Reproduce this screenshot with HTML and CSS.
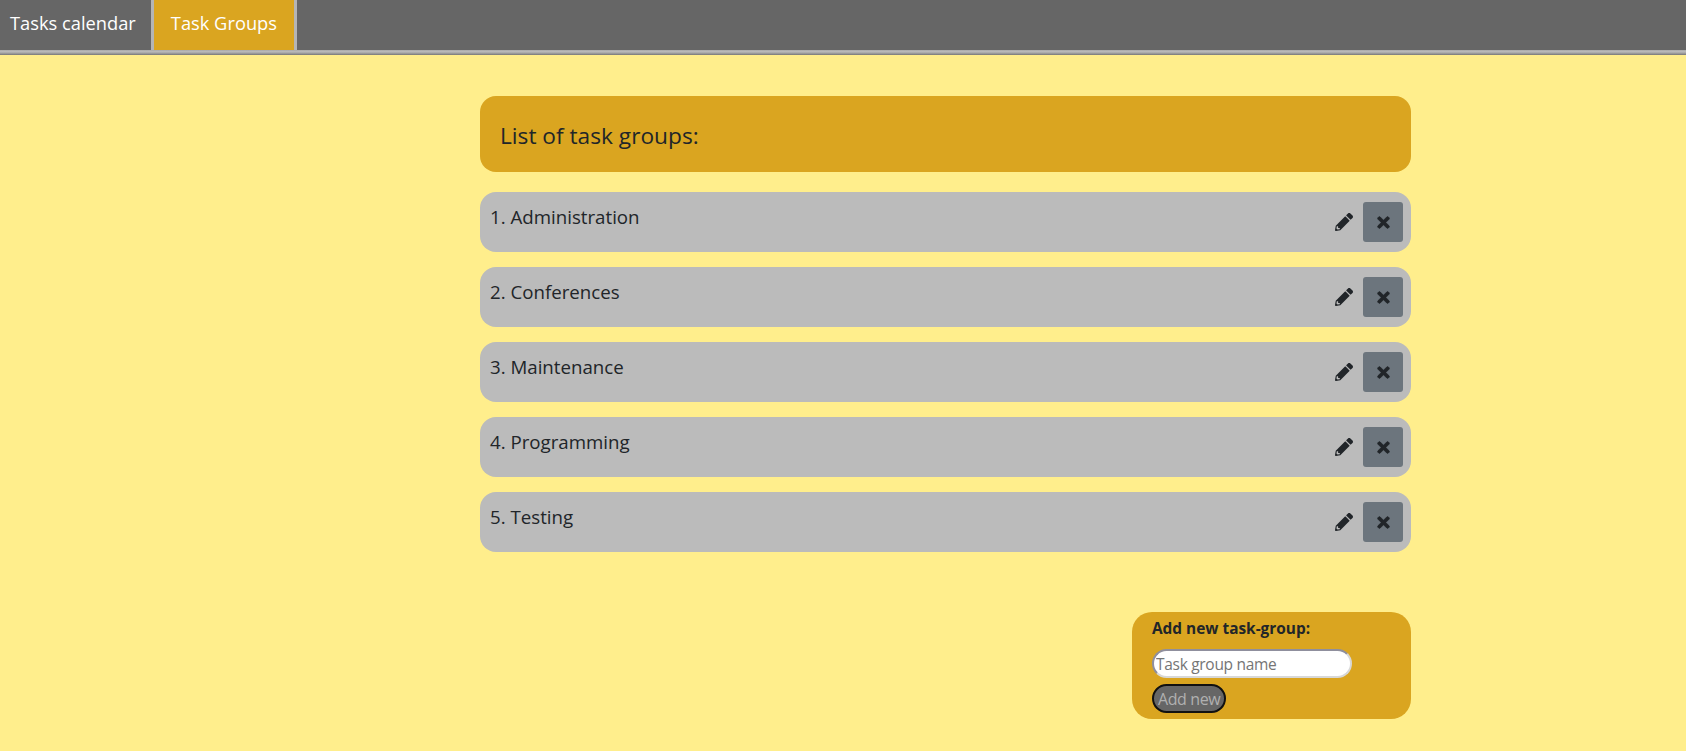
FILE: index.html
```html
<!DOCTYPE html>
<html lang="en">
<head>
    <meta charset="UTF-8">
    <meta name="viewport" content="width=device-width, initial-scale=1.0">
    <title>Task Groups</title>
    <link rel="stylesheet" href="styles.css">
</head>
<body>
    <nav class="topbar">
        <div class="tabs">
            <a class="tab" href="#">Tasks calendar</a>
            <a class="tab active" href="#">Task Groups</a>
        </div>
        <div class="topbar-line"></div>
    </nav>

    <main class="container">
        <div class="list-header">List of task groups:</div>

        <div class="group-row">
            <span class="group-name">1. Administration</span>
            <div class="group-actions">
                <svg class="icon-edit" viewBox="0 0 512 512"><path d="M497.9 142.1l-46.1 46.1c-4.7 4.7-12.3 4.7-17 0l-111-111c-4.7-4.7-4.7-12.3 0-17l46.1-46.1c18.7-18.7 49.1-18.7 67.9 0l60.1 60.1c18.8 18.7 18.8 49.1 0 67.9zM284.2 99.8L21.6 362.4.4 483.9c-2.9 16.4 11.4 30.6 27.8 27.8l121.5-21.3 262.6-262.6c4.7-4.7 4.7-12.3 0-17l-111-111c-4.8-4.7-12.4-4.7-17.1 0zM88 424h48v36.3l-64.5 11.3-31.1-31.1L51.7 376H88v48z"/></svg>
                <button class="btn-delete"><svg class="icon-delete" viewBox="-20 60 392 392"><path d="M242.72 256l100.07-100.07c12.28-12.28 12.28-32.19 0-44.48l-22.24-22.24c-12.28-12.28-32.19-12.28-44.48 0L176 189.28 75.93 89.21c-12.28-12.28-32.19-12.28-44.48 0L9.21 111.45c-12.28 12.28-12.28 32.19 0 44.48L109.28 256 9.21 356.07c-12.28 12.28-12.28 32.19 0 44.48l22.24 22.24c12.28 12.28 32.2 12.28 44.48 0L176 322.72l100.07 100.07c12.28 12.28 32.2 12.28 44.48 0l22.24-22.24c12.28-12.28 12.28-32.19 0-44.48L242.72 256z"/></svg></button>
            </div>
        </div>

        <div class="group-row">
            <span class="group-name">2. Conferences</span>
            <div class="group-actions">
                <svg class="icon-edit" viewBox="0 0 512 512"><path d="M497.9 142.1l-46.1 46.1c-4.7 4.7-12.3 4.7-17 0l-111-111c-4.7-4.7-4.7-12.3 0-17l46.1-46.1c18.7-18.7 49.1-18.7 67.9 0l60.1 60.1c18.8 18.7 18.8 49.1 0 67.9zM284.2 99.8L21.6 362.4.4 483.9c-2.9 16.4 11.4 30.6 27.8 27.8l121.5-21.3 262.6-262.6c4.7-4.7 4.7-12.3 0-17l-111-111c-4.8-4.7-12.4-4.7-17.1 0zM88 424h48v36.3l-64.5 11.3-31.1-31.1L51.7 376H88v48z"/></svg>
                <button class="btn-delete"><svg class="icon-delete" viewBox="-20 60 392 392"><path d="M242.72 256l100.07-100.07c12.28-12.28 12.28-32.19 0-44.48l-22.24-22.24c-12.28-12.28-32.19-12.28-44.48 0L176 189.28 75.93 89.21c-12.28-12.28-32.19-12.28-44.48 0L9.21 111.45c-12.28 12.28-12.28 32.19 0 44.48L109.28 256 9.21 356.07c-12.28 12.28-12.28 32.19 0 44.48l22.24 22.24c12.28 12.28 32.2 12.28 44.48 0L176 322.72l100.07 100.07c12.28 12.28 32.2 12.28 44.48 0l22.24-22.24c12.28-12.28 12.28-32.19 0-44.48L242.72 256z"/></svg></button>
            </div>
        </div>

        <div class="group-row">
            <span class="group-name">3. Maintenance</span>
            <div class="group-actions">
                <svg class="icon-edit" viewBox="0 0 512 512"><path d="M497.9 142.1l-46.1 46.1c-4.7 4.7-12.3 4.7-17 0l-111-111c-4.7-4.7-4.7-12.3 0-17l46.1-46.1c18.7-18.7 49.1-18.7 67.9 0l60.1 60.1c18.8 18.7 18.8 49.1 0 67.9zM284.2 99.8L21.6 362.4.4 483.9c-2.9 16.4 11.4 30.6 27.8 27.8l121.5-21.3 262.6-262.6c4.7-4.7 4.7-12.3 0-17l-111-111c-4.8-4.7-12.4-4.7-17.1 0zM88 424h48v36.3l-64.5 11.3-31.1-31.1L51.7 376H88v48z"/></svg>
                <button class="btn-delete"><svg class="icon-delete" viewBox="-20 60 392 392"><path d="M242.72 256l100.07-100.07c12.28-12.28 12.28-32.19 0-44.48l-22.24-22.24c-12.28-12.28-32.19-12.28-44.48 0L176 189.28 75.93 89.21c-12.28-12.28-32.19-12.28-44.48 0L9.21 111.45c-12.28 12.28-12.28 32.19 0 44.48L109.28 256 9.21 356.07c-12.28 12.28-12.28 32.19 0 44.48l22.24 22.24c12.28 12.28 32.2 12.28 44.48 0L176 322.72l100.07 100.07c12.28 12.28 32.2 12.28 44.48 0l22.24-22.24c12.28-12.28 12.28-32.19 0-44.48L242.72 256z"/></svg></button>
            </div>
        </div>

        <div class="group-row">
            <span class="group-name">4. Programming</span>
            <div class="group-actions">
                <svg class="icon-edit" viewBox="0 0 512 512"><path d="M497.9 142.1l-46.1 46.1c-4.7 4.7-12.3 4.7-17 0l-111-111c-4.7-4.7-4.7-12.3 0-17l46.1-46.1c18.7-18.7 49.1-18.7 67.9 0l60.1 60.1c18.8 18.7 18.8 49.1 0 67.9zM284.2 99.8L21.6 362.4.4 483.9c-2.9 16.4 11.4 30.6 27.8 27.8l121.5-21.3 262.6-262.6c4.7-4.7 4.7-12.3 0-17l-111-111c-4.8-4.7-12.4-4.7-17.1 0zM88 424h48v36.3l-64.5 11.3-31.1-31.1L51.7 376H88v48z"/></svg>
                <button class="btn-delete"><svg class="icon-delete" viewBox="-20 60 392 392"><path d="M242.72 256l100.07-100.07c12.28-12.28 12.28-32.19 0-44.48l-22.24-22.24c-12.28-12.28-32.19-12.28-44.48 0L176 189.28 75.93 89.21c-12.28-12.28-32.19-12.28-44.48 0L9.21 111.45c-12.28 12.28-12.28 32.19 0 44.48L109.28 256 9.21 356.07c-12.28 12.28-12.28 32.19 0 44.48l22.24 22.24c12.28 12.28 32.2 12.28 44.48 0L176 322.72l100.07 100.07c12.28 12.28 32.2 12.28 44.48 0l22.24-22.24c12.28-12.28 12.28-32.19 0-44.48L242.72 256z"/></svg></button>
            </div>
        </div>

        <div class="group-row">
            <span class="group-name">5. Testing</span>
            <div class="group-actions">
                <svg class="icon-edit" viewBox="0 0 512 512"><path d="M497.9 142.1l-46.1 46.1c-4.7 4.7-12.3 4.7-17 0l-111-111c-4.7-4.7-4.7-12.3 0-17l46.1-46.1c18.7-18.7 49.1-18.7 67.9 0l60.1 60.1c18.8 18.7 18.8 49.1 0 67.9zM284.2 99.8L21.6 362.4.4 483.9c-2.9 16.4 11.4 30.6 27.8 27.8l121.5-21.3 262.6-262.6c4.7-4.7 4.7-12.3 0-17l-111-111c-4.8-4.7-12.4-4.7-17.1 0zM88 424h48v36.3l-64.5 11.3-31.1-31.1L51.7 376H88v48z"/></svg>
                <button class="btn-delete"><svg class="icon-delete" viewBox="-20 60 392 392"><path d="M242.72 256l100.07-100.07c12.28-12.28 12.28-32.19 0-44.48l-22.24-22.24c-12.28-12.28-32.19-12.28-44.48 0L176 189.28 75.93 89.21c-12.28-12.28-32.19-12.28-44.48 0L9.21 111.45c-12.28 12.28-12.28 32.19 0 44.48L109.28 256 9.21 356.07c-12.28 12.28-12.28 32.19 0 44.48l22.24 22.24c12.28 12.28 32.2 12.28 44.48 0L176 322.72l100.07 100.07c12.28 12.28 32.2 12.28 44.48 0l22.24-22.24c12.28-12.28 12.28-32.19 0-44.48L242.72 256z"/></svg></button>
            </div>
        </div>

        <form class="add-form">
            <label class="add-label" for="groupName">Add new task-group:</label>
            <input class="add-input" type="text" id="groupName" placeholder="Task group name">
            <button class="add-button" type="button">Add new</button>
        </form>
    </main>
</body>
</html>
```

FILE: styles.css
```css
body {
    font-family: "Open Sans", "Noto Sans", Arial, sans-serif;
    margin: 0;
    padding: 0;
    min-height: 751px;
    background-color: #ffee8c;
    color: #212529;
}
.topbar {
    display: flex;
    flex-direction: column;
}
.tabs {
    display: flex;
    height: 50px;
    background: #666;
}
.topbar-line {
    height: 5px;
    background: linear-gradient(#aaa, #bbb 35%, #999 70%, #777);
}
.tab {
    display: flex;
    align-items: center;
    padding: 0 15px 5px 10px;
    color: #fff;
    font-size: 18.3px;
    text-decoration: none;
    border-right: 3px solid #b5b5b5;
}
.tab.active {
    padding: 0 17px 5px 17px;
    background: #daa520;
}
.container {
    width: 931px;
    margin: 41px 0 0 480px;
    display: flex;
    flex-direction: column;
}
.list-header {
    height: 76px;
    box-sizing: border-box;
    padding: 24px 20px 0;
    margin-bottom: 20px;
    font-size: 22.7px;
    background: #daa520;
    border-radius: 16px;
}
.group-row {
    display: flex;
    justify-content: space-between;
    height: 60px;
    box-sizing: border-box;
    padding: 11px 8px 10px 10px;
    margin-bottom: 15px;
    background: #bbb;
    border-radius: 16px;
}
.group-name {
    font-size: 18.7px;
    line-height: 27px;
}
.group-actions {
    display: flex;
    align-items: center;
    gap: 10px;
    margin-top: -1px;
}
.icon-edit {
    width: 18px;
    height: 18px;
    fill: #212529;
}
.btn-delete {
    display: flex;
    align-items: center;
    justify-content: center;
    width: 40px;
    height: 40px;
    padding: 0;
    background: #6c757d;
    border: none;
    border-radius: 3px;
}
.icon-delete {
    width: 13px;
    height: 13px;
    fill: #212529;
    stroke: #212529;
    stroke-width: 24;
    stroke-linejoin: round;
}
.add-form {
    display: flex;
    flex-direction: column;
    align-items: flex-start;
    align-self: flex-end;
    box-sizing: border-box;
    width: 279px;
    height: 107px;
    margin-top: 45px;
    padding: 7px 20px 0;
    background: #daa520;
    border-radius: 20px;
}
.add-label {
    font-size: 15.4px;
    font-weight: 700;
    line-height: 20px;
    margin-bottom: 10px;
}
.add-input {
    width: 200px;
    height: 29px;
    box-sizing: border-box;
    padding: 0 2px;
    font-family: inherit;
    font-size: 15.5px;
    letter-spacing: -0.3px;
    border: 2px solid;
    border-color: #8f8f9d #d8d8d8 #d8d8d8 #8f8f9d;
    border-radius: 15px;
    background: #fff;
}
.add-input::placeholder {
    color: #757575;
}
.add-button {
    height: 29px;
    margin-top: 6px;
    padding: 0 4px;
    font-family: inherit;
    font-size: 16px;
    letter-spacing: -0.4px;
    color: #b0b0b0;
    background: #666;
    border: 2px solid #111;
    border-radius: 15px;
}
```
